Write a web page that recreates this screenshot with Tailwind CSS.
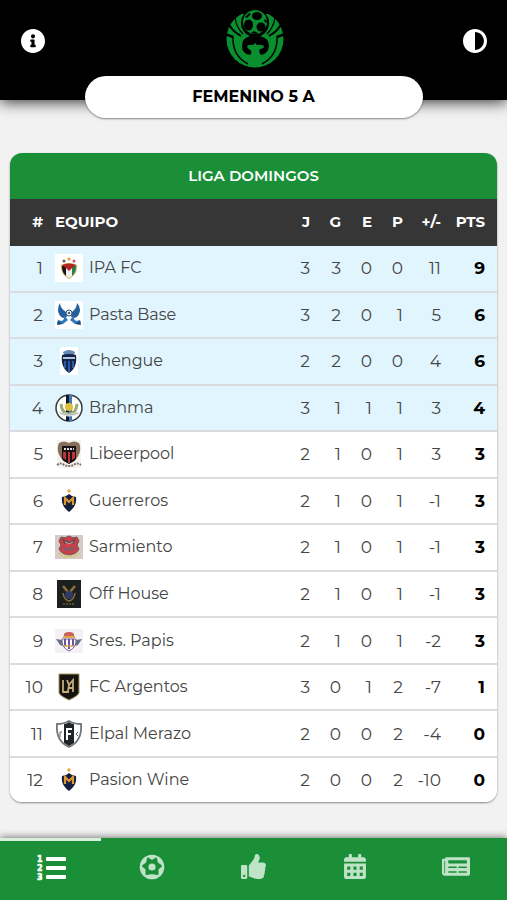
<!DOCTYPE html>
<html lang="es">
<head>
    <meta charset="UTF-8" />
    <meta name="viewport" content="width=device-width, initial-scale=1.0"/>
    <title>Liga Domingos - Femenino 5 A</title>
    <script src="https://cdn.jsdelivr.net/npm/@tailwindcss/browser@4"></script>
</head>
<body class="bg-[#f2f2f2] text-[#454545] font-['Montserrat',Inter,sans-serif] flex flex-col min-h-screen">

    <header class="bg-black h-[100px] px-5 pt-2 flex justify-between items-start shadow-[0_2px_14px_rgba(0,0,0,0.8)]">
        <button type="button" aria-label="Información" class="w-6 h-[66px] mx-px flex items-center justify-center text-white">
            <svg class="w-6 h-6" viewBox="8 8 496 496" fill="currentColor"><path d="M256 8C119.043 8 8 119.083 8 256c0 136.997 111.043 248 248 248s248-111.003 248-248C504 119.083 392.957 8 256 8zm0 110c23.196 0 42 18.804 42 42s-18.804 42-42 42-42-18.804-42-42 18.804-42 42-42zm56 254c0 6.627-5.373 12-12 12h-88c-6.627 0-12-5.373-12-12v-24c0-6.627 5.373-12 12-12h12v-64h-12c-6.627 0-12-5.373-12-12v-24c0-6.627 5.373-12 12-12h64c6.627 0 12 5.373 12 12v100h12c6.627 0 12 5.373 12 12v24z"/></svg>
        </button>
        <!-- Escudo -->
        <svg class="w-[60px] h-[60px]" viewBox="0 0 60 60" fill="#0a8f2f">
            <circle cx="30" cy="31" r="28.500"/>
            <path d="M15 0h30v6H15z" fill="#000"/>
            <g fill="none" stroke="#000">
                <path d="M3 15q4 8 13 13M57 15q-4 8-13 13" stroke-width="2"/>
                <path d="M0 26l8 3M60 26l-8 3" stroke-width="2.500"/>
                <path d="M8 28q-1 20 15 28M52 28q1 20-15 28" stroke-width="1.500"/>
                <path d="M10 9q1 10 8 17M50 9q-1 10-8 17" stroke-width="1.300"/>
            </g>
            <circle cx="30" cy="15" r="14" fill="#000"/>
            <path d="M25 28l5 1 5-1q9 2 9 10-1 8-8 9-3-4-1-6 4 0 4-3-4-2-7-1l-2-2-2 2q-3-1-6 1 0 2 3 4 3 2 0 5-8-1-8-9 0-8 8-10z" fill="#000"/>
            <circle cx="30" cy="14" r="12"/>
            <g fill="#000">
                <ellipse cx="32" cy="8" rx="5" ry="4"/><ellipse cx="23.500" cy="17" rx="4.500" ry="5.500"/><ellipse cx="36" cy="19" rx="4.500" ry="4.500"/>
                <path d="M20 9l4-4 2 1-4 4zM26 25l3-2 4 2-2 1zM40 11l2 2-1 2-2-2z"/>
            </g>
        </svg>
        <button type="button" aria-label="Cambiar contraste" class="w-6 h-[66px] flex items-center justify-center text-white">
            <svg class="w-6 h-6" viewBox="8 8 496 496" fill="currentColor"><path d="M8 256c0 136.966 111.033 248 248 248s248-111.034 248-248S392.966 8 256 8 8 119.033 8 256zm248 184V72c101.705 0 184 82.311 184 184 0 101.705-82.311 184-184 184z"/></svg>
        </button>
    </header>

    <button type="button" class="relative -mt-6 mx-auto w-2/3 h-[42px] shrink-0 rounded-full bg-white text-black font-bold text-base shadow-[0_1px_2px_rgba(0,0,0,0.45)]">FEMENINO 5 A</button>

    <main class="grow flex flex-col px-[10px] pt-[35px] pb-9">
        <section class="grow flex flex-col rounded-xl overflow-hidden bg-white shadow-[0_1px_2px_rgba(0,0,0,0.45)]">
            <h1 class="h-[46px] flex items-center justify-center bg-[#1a8f38] text-white font-semibold text-[15px]">LIGA DOMINGOS</h1>
            <table class="grow w-full table-fixed text-right text-[17px] leading-6">
                <colgroup>
                    <col class="w-[39px]"><col><col class="w-[31px]"><col class="w-[31px]"><col class="w-[31px]"><col class="w-[31px]"><col class="w-[38px]"><col class="w-[50px]">
                </colgroup>
                <thead class="bg-[#363636] text-white text-[15px]">
                    <tr class="h-[46px]">
                        <th scope="col" class="pr-1.5">#</th>
                        <th scope="col" class="pl-1.5 text-left">EQUIPO</th>
                        <th scope="col" class="pr-1.5">J</th>
                        <th scope="col" class="pr-1.5">G</th>
                        <th scope="col" class="pr-1.5">E</th>
                        <th scope="col" class="pr-1.5">P</th>
                        <th scope="col" class="pr-1.5">+/-</th>
                        <th scope="col" class="pr-3">PTS</th>
                    </tr>
                </thead>
                <tbody id="standings"></tbody>
            </table>
        </section>
    </main>

    <nav class="bg-[#1a8f38] h-[62px] grid grid-cols-5 text-[#bfe3c7] shadow-[0_-1px_7px_rgba(0,0,0,0.5)]">
        <a href="#posiciones" aria-label="Posiciones" class="border-t-[3px] border-[#d9eedd] pb-2 flex items-center justify-center text-white">
            <svg class="w-[30px] h-[26px] overflow-visible" viewBox="0 0 30 26" fill="currentColor">
                <g font-family="DejaVu Sans" font-weight="bold" font-size="8" stroke="currentColor" stroke-width=".6"><text x="1" y="8">1</text><text x="1" y="17">2</text><text x="1" y="26">3</text></g>
                <rect x="10" y="3" width="20" height="4" rx="1"/><rect x="10" y="12" width="20" height="4" rx="1"/><rect x="10" y="21" width="20" height="4" rx="1"/>
            </svg>
        </a>
        <a href="#partidos" aria-label="Partidos" class="border-t-[3px] border-transparent pb-2 flex items-center justify-center">
            <svg class="w-[26px] h-[26px]" viewBox="-13 -13 26 26">
                <circle r="12.300" fill="currentColor"/>
                <path d="M0-6L4-8.500 5-4 9-1 5.500 2 5.500 7 0 6-5.500 7-5.500 2-9-1-5-4-4-8.500z" fill="#1a8f38" stroke="#1a8f38" stroke-width="2" stroke-linejoin="round"/>
                <circle r="3.600" fill="currentColor"/>
            </svg>
        </a>
        <a href="#destacados" aria-label="Destacados" class="border-t-[3px] border-transparent pb-2 flex items-center justify-center">
            <svg class="w-[25px] h-[25px]" viewBox="0 0 512 512" fill="currentColor"><path d="M104 224H24c-13.255 0-24 10.745-24 24v240c0 13.255 10.745 24 24 24h80c13.255 0 24-10.745 24-24V248c0-13.255-10.745-24-24-24zM64 472c-13.255 0-24-10.745-24-24s10.745-24 24-24 24 10.745 24 24-10.745 24-24 24zM384 81.452c0 42.416-25.97 66.208-33.277 94.548h101.723c33.397 0 59.397 27.746 59.553 58.098.084 17.938-7.546 37.249-19.439 49.197l-.11.11c9.836 23.337 8.237 56.037-9.308 79.469 8.681 25.895-.069 57.704-16.382 74.757 4.298 17.598 2.244 32.575-6.148 44.632C440.202 511.587 389.616 512 346.839 512l-2.845-.001c-48.287-.017-87.806-17.598-119.56-31.725-15.957-7.099-36.821-15.887-52.651-16.178-6.54-.12-11.783-5.457-11.783-11.998v-213.77c0-3.2 1.282-6.271 3.558-8.521 39.614-39.144 56.648-80.587 89.117-113.111 14.804-14.832 20.188-37.236 25.393-58.902C282.515 39.293 291.817 0 312 0c24 0 72 8 72 81.452z"/></svg>
        </a>
        <a href="#calendario" aria-label="Calendario" class="border-t-[3px] border-transparent pb-2 flex items-center justify-center">
            <svg class="w-[22px] h-[25px]" viewBox="0 0 448 512" fill="currentColor"><path fill-rule="evenodd" d="M0 464c0 26.500 21.500 48 48 48h352c26.500 0 48-21.500 48-48V192H0v272zM64 256h64v64H64zM192 256h64v64h-64zM320 256h64v64h-64zM64 384h64v64H64zM192 384h64v64h-64zM320 384h64v64h-64zM400 64h-48V16c0-8.800-7.200-16-16-16h-32c-8.800 0-16 7.200-16 16v48H160V16c0-8.800-7.200-16-16-16h-32c-8.800 0-16 7.200-16 16v48H48C21.500 64 0 85.500 0 112v48h448v-48c0-26.500-21.500-48-48-48z"/></svg>
        </a>
        <a href="#noticias" aria-label="Noticias" class="border-t-[3px] border-transparent pb-2 flex items-center justify-center">
            <svg class="w-7 h-[25px]" viewBox="0 0 576 512" fill="currentColor"><path d="M552 64H88c-13.255 0-24 10.745-24 24v8H24c-13.255 0-24 10.745-24 24v272c0 30.928 25.072 56 56 56h472c26.51 0 48-21.49 48-48V88c0-13.255-10.745-24-24-24zM56 400a8 8 0 0 1-8-8V144h16v248a8 8 0 0 1-8 8zm236-16H140c-6.627 0-12-5.373-12-12v-8c0-6.627 5.373-12 12-12h152c6.627 0 12 5.373 12 12v8c0 6.627-5.373 12-12 12zm208 0H348c-6.627 0-12-5.373-12-12v-8c0-6.627 5.373-12 12-12h152c6.627 0 12 5.373 12 12v8c0 6.627-5.373 12-12 12zm-208-96H140c-6.627 0-12-5.373-12-12v-8c0-6.627 5.373-12 12-12h152c6.627 0 12 5.373 12 12v8c0 6.627-5.373 12-12 12zm208 0H348c-6.627 0-12-5.373-12-12v-8c0-6.627 5.373-12 12-12h152c6.627 0 12 5.373 12 12v8c0 6.627-5.373 12-12 12zm0-96H140c-6.627 0-12-5.373-12-12v-40c0-6.627 5.373-12 12-12h360c6.627 0 12 5.373 12 12v40c0 6.627-5.373 12-12 12z"/></svg>
        </a>
    </nav>

<script>
    // Escudos de los equipos, en un lienzo de 28x28
    const starShield = `
        <circle cx="14" cy="4" r="1.7" fill="#f0a63a"/>
        <path d="M7 10q4 0 7-3 3 3 7 3c1 7-2 11-7 15C9 21 6 17 7 10z" fill="#14203f"/>
        <path d="M10 18v-7l4 4 4-4v7" fill="none" stroke="#dd9838" stroke-width="2.2"/>`;
    const crests = {
        ipa: `
            <path d="M0 0h28v28H0z" fill="#fff"/>
            <circle cx="9" cy="7" r="1.5" fill="#59605a"/><circle cx="14" cy="5" r="1.6" fill="#e3a02c"/><circle cx="19" cy="7" r="1.5" fill="#dd4770"/>
            <path d="M6 11q8-4 16 0c0 7-2 10-8 14-6-4-8-7-8-14z" fill="#c5a45a"/>
            <path d="M7 12h4v10c-3-3-4-6-4-10z" fill="#151515"/><path d="M17 12h4c0 4-1 7-4 10z" fill="#238447"/>
            <path d="M11 14h6v8l-3 2-3-2z" fill="#f4eeee"/><path d="M7 11q7-3 14 0l-4 3-3 3-3-3z" fill="#b52323"/>`,
        pasta: `
            <path d="M0 0h28v28H0z" fill="#fff"/>
            <path d="M5 2q0 5 6 9l1 5-4 1q-5-3-5-8 0-4 2-7zM22 2q0 5-5 9l-1 5 4 1q5-3 5-8 0-4-3-7z" fill="#23609c"/>
            <circle cx="14" cy="12" r="3" fill="#e8edf3" stroke="#315079"/><circle cx="14" cy="12" r="1" fill="#202c42"/>
            <path d="M9 14l4 5-5 4-6-1 1-3 4 1 2-2zM19 14l-4 5 5 4 6-1-1-3-4 1-2-2z" fill="#3279ba"/>
            <path d="M3 20l-1 4 6-1zM25 20l1 4-6-1z" fill="#194777"/>`,
        chengue: `
            <path d="M5 0h18v28H5z" fill="#fff"/>
            <path d="M8 5q6-4 12 0l-1 3H9z" fill="#6689b5"/>
            <path d="M7 8q7-2 14 0c1 8-1 14-7 18C8 22 6 16 7 8z" fill="#15244a"/>
            <path d="M10 14v7M14 14v11M18 14v7" stroke="#2d5ba8" stroke-width="2"/><path d="M8 11h12" stroke="#b9c8dd" stroke-width="2"/>`,
        brahma: `
            <circle cx="14" cy="14" r="13" fill="#fff" stroke="#35393b" stroke-width="1.5"/>
            <path d="M11 1h5v26h-5z" fill="#111820"/><path d="M14 1h3v26h-3z" fill="#3d78b9"/>
            <path d="M6 10q1 10 8 10t8-10" fill="none" stroke="#9aaa78" stroke-width="3"/><circle cx="14" cy="13" r="4" fill="#e0bd3a"/>
            <path d="M4 17q10 6 20 0v3q-10 5-20 0z" fill="#e8ecec"/><path d="M5 19q9 4 18 0" fill="none" stroke="#7b8284" stroke-width=".6"/>`,
        libeerpool: `
            <path d="M2 0h24v28H2z" fill="#f6f3ef"/>
            <path d="M4 3q5-3 10 0 5-3 10 0c3 6 0 13-3 16l-7 5-7-5C4 16 1 9 4 3z" fill="#86705c"/>
            <path d="M7 6h14v12c0 3-4 4-7 6-3-2-7-3-7-6z" fill="#151313"/><path d="M8 12h3v8l-3-2zM13 12h2v11h-2zM17 12h3v6l-3 2z" fill="#c33434"/>
            <path d="M9 9h10" stroke="#ddd" stroke-width="2" stroke-dasharray="2 1"/><path d="M2 25q4-3 7 0 5 2 10 0 3-3 7 0" fill="none" stroke="#77736d" stroke-width="2" stroke-dasharray="2 1"/>`,
        guerreros: starShield,
        sarmiento: `
            <path d="M0 2h28v24H0z" fill="#d6cbc7"/>
            <path d="M6 4q4 2 8-1 4 3 8 1l2 4-2 4 2 4q-2 5-10 6-8-1-10-6l2-4-2-4z" fill="#cc3f46" stroke="#705457"/>
            <path d="M7 5l7 4 7-4-2 6H9z" fill="#6c4a50"/><path d="M7 14h5l2 2 2-2h5l-3 4h-3l-1-1-1 1h-3z" fill="#8a5968"/><path d="M10 9l4 2 4-2" fill="none" stroke="#d9a6a2"/>
            <path d="M4 20q5 5 10 3 6 2 10-3" fill="none" stroke="#d4c260" stroke-width="2" stroke-dasharray="2 1"/>`,
        offhouse: `
            <path d="M2 0h24v28H2z" fill="#1c1f20"/>
            <path d="M8 6l5 6M20 6l-5 6" stroke="#8d7137" stroke-width="2.5"/><circle cx="14" cy="15" r="4" fill="#303a65"/>
            <path d="M8 13q1 7 6 8 5-1 6-8" fill="none" stroke="#887137" stroke-width="1.5"/><path d="M8 24h12" stroke="#675933" stroke-width="1.5" stroke-dasharray="2 1"/>`,
        papis: `
            <path d="M0 2h28v24H0z" fill="#f3f1f5"/>
            <path d="M9 9q-1-4 5-4t5 4z" fill="#c86455"/><path d="M8 9h12v2H8z" fill="#dfa550"/>
            <path d="M7 12h14q1 8-7 12-8-4-7-12z" fill="#fff" stroke="#786494"/><path d="M10 12v7M14 12v10M18 12v7" stroke="#70519d" stroke-width="2"/>
            <path d="M1 12l6 1 1 6-3-1zM27 12l-6 1-1 6 3-1z" fill="#687088"/><path d="M9 19h10" stroke="#d3a459" stroke-width="1.5"/>`,
        argentos: `
            <path d="M4 1h20v19q-1 3-10 7-9-4-10-7z" fill="#151411" stroke="#a99563"/>
            <path d="M8 7v12h6M12 7l2 5 4-5v12M13 15h5M14 12l-1 6" fill="none" stroke="#c5ad77" stroke-width="1.8"/>`,
        elpal: `
            <path d="M2 4q7 0 12-3 5 3 12 3c1 12-3 19-12 23C5 23 1 16 2 4z" fill="#fff" stroke="#727577" stroke-width="1.8"/>
            <path d="M9 4q3 0 5-2 2 2 5 2v19l-5 3-5-3z" fill="#202426"/><path d="M12 20V9h5M12 14h4" fill="none" stroke="#fff" stroke-width="2"/>
            <path d="M5 12v5M5 12h2M23 12l-2 2 2 2" fill="none" stroke="#606365"/>`,
        pasion: starShield
    };

    const teams = [
        ['IPA FC', 'ipa', 3, 3, 0, 0, 11, 9],
        ['Pasta Base', 'pasta', 3, 2, 0, 1, 5, 6],
        ['Chengue', 'chengue', 2, 2, 0, 0, 4, 6],
        ['Brahma', 'brahma', 3, 1, 1, 1, 3, 4],
        ['Libeerpool', 'libeerpool', 2, 1, 0, 1, 3, 3],
        ['Guerreros', 'guerreros', 2, 1, 0, 1, -1, 3],
        ['Sarmiento', 'sarmiento', 2, 1, 0, 1, -1, 3],
        ['Off House', 'offhouse', 2, 1, 0, 1, -1, 3],
        ['Sres. Papis', 'papis', 2, 1, 0, 1, -2, 3],
        ['FC Argentos', 'argentos', 3, 0, 1, 2, -7, 1],
        ['Elpal Merazo', 'elpal', 2, 0, 0, 2, -4, 0],
        ['Pasion Wine', 'pasion', 2, 0, 0, 2, -10, 0]
    ];

    // Los cuatro primeros clasifican
    document.getElementById('standings').innerHTML = teams.map(([name, crest, ...stats], index) => {
        const points = stats.pop();
        return `
            <tr class="border-t-2 border-[#dadde0] first:border-[#363636] ${index < 4 ? 'bg-[#e1f5fe]' : 'bg-white'}">
                <td class="pr-1.5">${index + 1}</td>
                <td class="pl-1.5">
                    <div class="flex items-center gap-1.5 text-left text-base whitespace-nowrap">
                        <svg class="w-7 h-7 shrink-0" viewBox="0 0 28 28" aria-hidden="true">${crests[crest]}</svg>
                        <span>${name}</span>
                    </div>
                </td>
                ${stats.map(value => `<td class="pr-1.5">${value}</td>`).join('')}
                <td class="pr-3 font-bold text-black">${points}</td>
            </tr>
        `;
    }).join('');
</script>

</body>
</html>
